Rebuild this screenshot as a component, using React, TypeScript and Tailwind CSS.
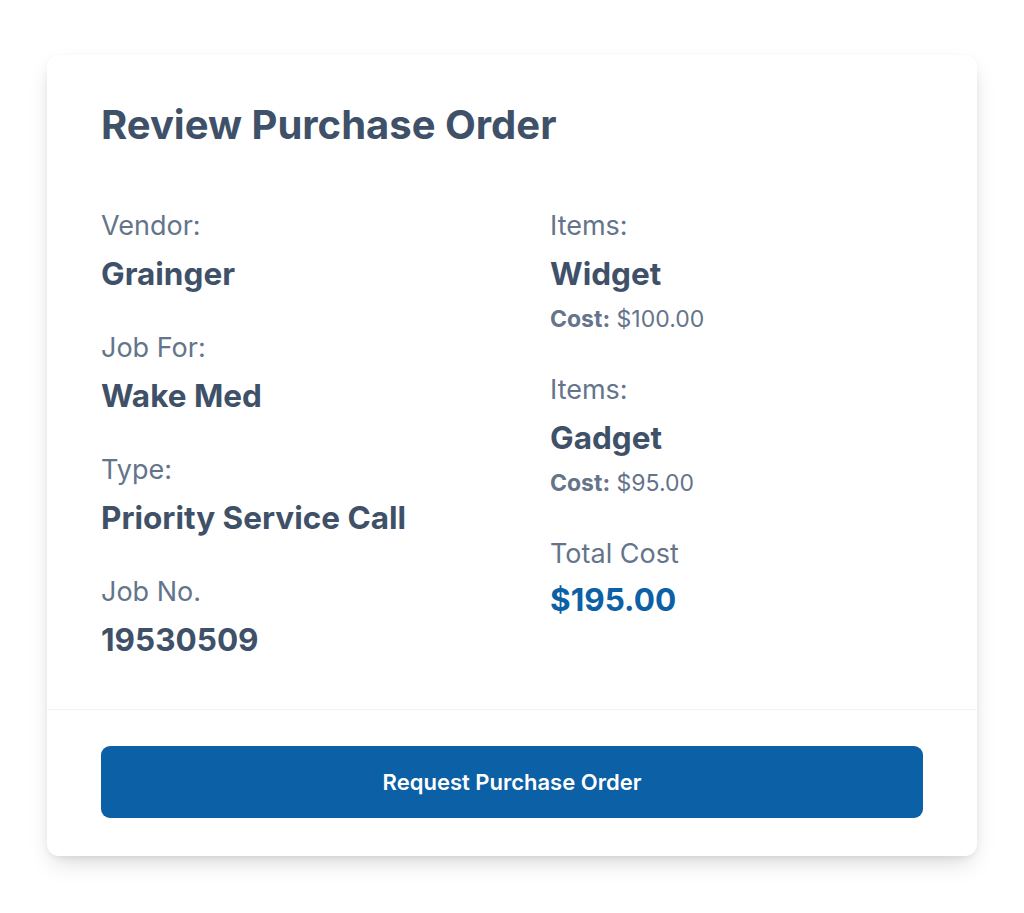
import React from "react";

function Field({ label, value }: { label: string; value: string }) {
  return (
    <div className="flex flex-col">
      <div className="text-[27px] leading-[42px] text-[#64748b]">{label}</div>
      <div className="mt-[6px] text-[31.5px] leading-[42px] font-bold text-[#3f5168]">{value}</div>
    </div>
  );
}

function Item({ name, cost }: { name: string; cost: string }) {
  return (
    <div className="flex flex-col">
      <div className="text-[27px] leading-[42px] text-[#64748b]">Items:</div>
      <div className="mt-[6px] text-[31.5px] leading-[42px] font-bold text-[#3f5168]">{name}</div>
      <div className="mt-[9px] text-[23px] leading-[30px] text-[#64748b]">
        <span className="font-bold">Cost:</span> {cost}
      </div>
    </div>
  );
}

export default function App() {
  return (
    <div
      className="min-h-[913px] w-full bg-white pt-[55px]"
      style={{ fontFamily: "Inter, 'Noto Sans', sans-serif" }}
    >
      <div className="mx-auto w-[930px] overflow-hidden rounded-[12px] bg-white shadow-[0_10px_24px_-6px_rgba(0,0,0,0.18),0_3px_8px_-3px_rgba(0,0,0,0.1)]">
        <div className="px-[54px] pt-[46px] pb-[48px]">
          <h1 className="text-[40px] leading-[48px] font-bold text-[#3f5168]">Review Purchase Order</h1>
          <div className="mt-[56px] grid grid-cols-[449px_1fr]">
            <div className="flex flex-col gap-[32px]">
              <Field label="Vendor:" value="Grainger" />
              <Field label="Job For:" value="Wake Med" />
              <Field label="Type:" value="Priority Service Call" />
              <Field label="Job No." value="19530509" />
            </div>
            <div className="flex flex-col gap-[35px]">
              <Item name="Widget" cost="$100.00" />
              <Item name="Gadget" cost="$95.00" />
              <div className="flex flex-col">
                <div className="text-[27px] leading-[42px] text-[#64748b]">Total Cost</div>
                <div className="mt-[4px] text-[31.5px] leading-[42px] font-bold text-[#0c60a6]">$195.00</div>
              </div>
            </div>
          </div>
        </div>
        <div className="border-t border-[#f1f2f4] px-[54px] pt-[36px] pb-[38px]">
          <button className="flex h-[72px] w-full items-center justify-center rounded-[9px] bg-[#0c60a6] text-[22px] font-semibold text-white">
            Request Purchase Order
          </button>
        </div>
      </div>
    </div>
  );
}
